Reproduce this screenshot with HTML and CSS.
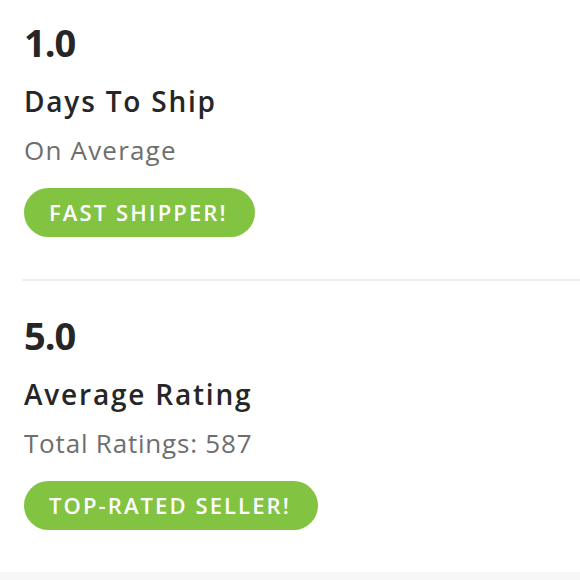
FILE: index.html
```html
<!DOCTYPE html>
<html>
<head>
<meta charset="utf-8">
<link rel="stylesheet" href="styles.css">
</head>
<body>
<div class="stats">
  <section class="stat stat-first">
    <div class="num">1.0</div>
    <div class="title">Days To Ship</div>
    <div class="sub">On Average</div>
    <span class="badge">FAST SHIPPER!</span>
  </section>
  <section class="stat">
    <div class="num">5.0</div>
    <div class="title">Average Rating</div>
    <div class="sub sub-count">Total Ratings: 587</div>
    <span class="badge">TOP-RATED SELLER!</span>
  </section>
  <div class="footer-strip"></div>
</div>
</body>
</html>
```
FILE: styles.css
```css
html, body {
  margin: 0;
  padding: 0;
  background: #ffffff;
}
.stats {
  font-family: "Open Sans", "Liberation Sans", sans-serif;
  padding-left: 24px;
  color: #262626;
}
.stat {
  display: flex;
  flex-direction: column;
  align-items: flex-start;
  padding-top: 35px;
  padding-bottom: 42px;
}
.stat-first {
  padding-top: 23px;
  border-bottom: 2px solid #efefef;
  margin-left: -2px;
  padding-left: 2px;
}
.num {
  font-size: 38px;
  line-height: 38px;
  font-weight: 700;
  letter-spacing: -1px;
}
.title {
  margin-top: 26px;
  font-size: 28px;
  line-height: 28px;
  font-weight: 600;
  letter-spacing: 1.8px;
}
.sub {
  margin-top: 22px;
  font-size: 26px;
  line-height: 26px;
  color: #6e6e6e;
  letter-spacing: 1.2px;
}
.sub-count {
  letter-spacing: 0.8px;
}
.badge {
  margin-top: 25px;
  height: 49px;
  line-height: 49px;
  padding: 0 27px 0 25px;
  border-radius: 25px;
  background: #82c341;
  color: #ffffff;
  font-size: 22px;
  font-weight: 600;
  letter-spacing: 2.1px;
}
.footer-strip {
  margin-left: -24px;
  height: 9px;
  background: #f7f7f7;
}
```
